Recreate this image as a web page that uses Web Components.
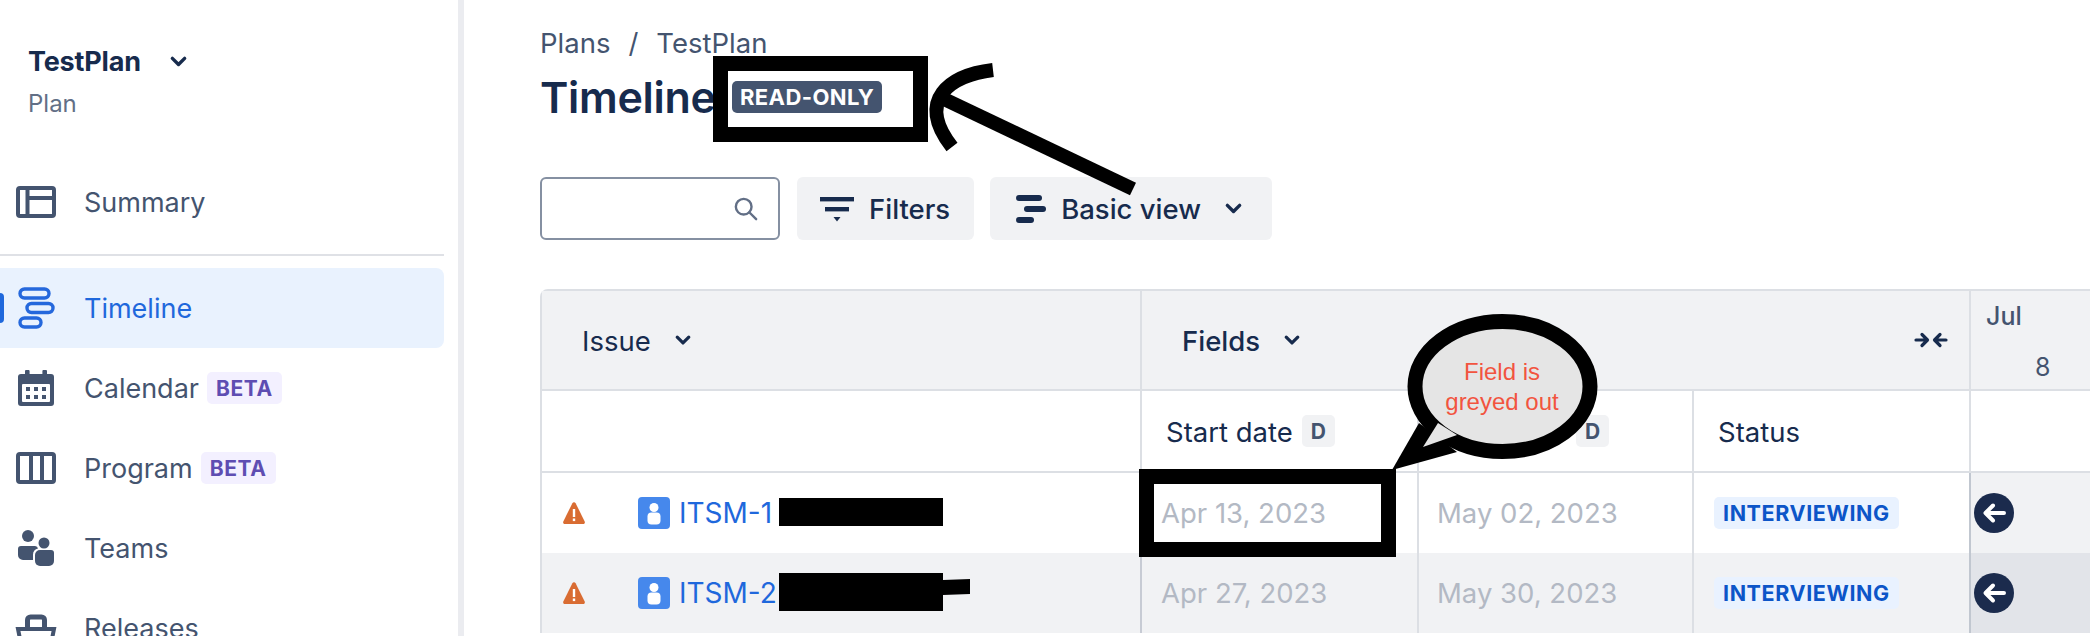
<!DOCTYPE html>
<html>
<head>
<meta charset="utf-8">
<style>
  html, body { margin: 0; height: 100%; background: #fff; }
  body { font-family: Inter, "Noto Sans", sans-serif; color: #172b4d; overflow: hidden; }
</style>
</head>
<body>
<app-shell>
  <app-sidebar slot="sidebar">
    <nav-item icon="summary">Summary</nav-item>
    <nav-item divider></nav-item>
    <nav-item icon="timeline" active>Timeline</nav-item>
    <nav-item icon="calendar" badge="BETA">Calendar</nav-item>
    <nav-item icon="program" badge="BETA">Program</nav-item>
    <nav-item icon="teams">Teams</nav-item>
    <nav-item icon="releases">Releases</nav-item>
  </app-sidebar>

  <page-head>
    <tool-button icon="filter">Filters</tool-button>
    <tool-button icon="basic" caret>Basic view</tool-button>
  </page-head>

  <plan-table>
    <table-row kind="head">
      <table-cell pad="40" low><strong-label caret>Issue</strong-label></table-cell>
      <table-cell span="3" pad="40" line low>
        <strong-label caret style="font-weight:500">Fields</strong-label>
        <app-icon name="collapse" size="34" style="margin:-2px 21px 0 auto"></app-icon>
      </table-cell>
      <table-cell line pad="15"><month-label month="Jul" day="8"></month-label></table-cell>
    </table-row>
    <table-row kind="sub">
      <table-cell></table-cell>
      <table-cell line pad="24" low>Start date<key-tag></key-tag></table-cell>
      <table-cell line pad="148" low><key-tag></key-tag></table-cell>
      <table-cell line pad="24" low>Status</table-cell>
      <table-cell line></table-cell>
    </table-row>
    <issue-row key="ITSM-1" start="Apr 13, 2023" end="May 02, 2023"></issue-row>
    <issue-row key="ITSM-2" start="Apr 27, 2023" end="May 30, 2023" shaded></issue-row>
  </plan-table>

  <mark-up slot="overlay"></mark-up>
</app-shell>

<script>
const ICONS = {
  summary: `<svg viewBox="0 0 40 32" fill="none" stroke="#44546f" stroke-width="4"><rect x="2" y="2" width="36" height="28" rx="2"/><path d="M11.5 2v28M11.5 12H38"/></svg>`,
  timeline: `<svg viewBox="0 0 40 42" fill="none" stroke="#2568dc" stroke-width="3.4"><rect x="4" y="2" width="29" height="9" rx="4.5"/><rect x="11" y="16.5" width="26" height="9" rx="4.5"/><rect x="4" y="31" width="21" height="9" rx="4.5"/></svg>`,
  calendar: `<svg viewBox="0 0 40 36" fill="#44546f"><path d="M10 0h2.600a1 1 0 0 1 1 1v3h12.800V1a1 1 0 0 1 1-1H30a1 1 0 0 1 1 1v3h4a3 3 0 0 1 3 3v26a3 3 0 0 1-3 3H5a3 3 0 0 1-3-3V7a3 3 0 0 1 3-3h4V1a1 1 0 0 1 1-1z"/><rect x="6" y="14" width="28" height="18" rx="1" fill="#fff"/><path d="M10 17h4v4h-4zM18 17h4v4h-4zM26 17h4v4h-4zM10 25h4v4h-4zM18 25h4v4h-4zM26 25h4v4h-4z"/></svg>`,
  program: `<svg viewBox="0 0 40 32" fill="none" stroke="#44546f" stroke-width="4"><rect x="2" y="2" width="36" height="28" rx="2"/><path d="M15 2v28M26 2v28"/></svg>`,
  teams: `<svg viewBox="0 0 40 36" fill="#44546f"><circle cx="12" cy="6" r="6"/><circle cx="28" cy="13" r="5.500"/><path d="M2 19a3 3 0 0 1 3-3h14a3 3 0 0 1 3 2.500c-3 .5-5 3-5 6V30H7a5 5 0 0 1-5-5z"/><path d="M19 25a5 5 0 0 1 5-5h11a3 3 0 0 1 3 3v8a5 5 0 0 1-5 5h-9a5 5 0 0 1-5-5z"/></svg>`,
  releases: `<svg viewBox="0 0 40 36" fill="none" stroke="#44546f" stroke-width="4"><path d="M11.500 17v-7a3 3 0 0 1 3-3h11a3 3 0 0 1 3 3v7" stroke-width="5"/><path d="M2 19h36l-3 15H5z"/></svg>`,
  filter: `<svg viewBox="0 0 34 24" fill="#172b4d"><rect width="34" height="4.400"/><rect x="5" y="10" width="24" height="4.400"/><path d="M13.500 20h7L17 24.500z"/></svg>`,
  basic: `<svg viewBox="0 0 30 28" fill="#172b4d"><rect width="26" height="6" rx="3"/><rect x="8" y="11" width="22" height="6" rx="3"/><rect y="22" width="18" height="6" rx="3"/></svg>`,
  chevron: `<svg viewBox="0 0 18 12" fill="none" stroke="currentColor" stroke-width="3.600" stroke-linecap="round" stroke-linejoin="round"><path d="M2.500 2.500L9 9l6.500-6.500"/></svg>`,
  search: `<svg viewBox="0 0 26 26" fill="none" stroke="#626f86" stroke-width="2.600" stroke-linecap="round"><circle cx="10.500" cy="10.500" r="8.500"/><path d="M16.500 16.500l7.500 7.500"/></svg>`,
  collapse: `<svg viewBox="0 0 34 16" fill="none" stroke="#172b4d" stroke-width="3.200" stroke-linecap="round" stroke-linejoin="round"><path d="M2 8h11M8 2.500L13.500 8 8 13.500M32 8H21M26 2.500L20.500 8 26 13.500"/></svg>`,
  warning: `<svg viewBox="0 0 22 22" fill="#d96c32"><path d="M9.400 1.200a1.800 1.800 0 0 1 3.200 0l9.100 18.200A1.800 1.800 0 0 1 20.100 22H1.900a1.800 1.800 0 0 1-1.600-2.600z"/><rect x="9.800" y="7" width="2.400" height="8" fill="#fff"/><rect x="9.800" y="16.500" width="2.400" height="2.600" fill="#fff"/></svg>`,
  person: `<svg viewBox="0 0 32 32"><rect width="32" height="32" rx="4" fill="#4688ec"/><circle cx="16" cy="10.500" r="4.500" fill="#fff"/><rect x="9.500" y="15.500" width="13" height="12" rx="4" fill="#fff"/></svg>`,
  back: `<svg viewBox="0 0 40 40"><circle cx="20" cy="20" r="20" fill="#1b2b4d"/><path d="M30 20H12M19 12.500L11.500 20 19 27.500" fill="none" stroke="#fff" stroke-width="4" stroke-linecap="round" stroke-linejoin="round"/></svg>`
};

class AppIcon extends HTMLElement {
  connectedCallback() {
    const size = this.getAttribute("size") || 40;
    this.attachShadow({ mode: "open" }).innerHTML = `
      <style>
        :host { display: inline-flex; flex: none; width: ${size}px; }
        svg { display: block; width: 100%; height: auto; overflow: visible; }
      </style>${ICONS[this.getAttribute("name")]}`;
  }
}
customElements.define("app-icon", AppIcon);

class AppShell extends HTMLElement {
  constructor() {
    super();
    this.attachShadow({ mode: "open" }).innerHTML = `
      <style>
        :host { display: flex; position: relative; width: 2090px; height: 636px; overflow: hidden; }
        main { flex: 1; min-width: 0; display: flex; flex-direction: column; padding: 28px 0 0 76px; }
      </style>
      <slot name="sidebar"></slot>
      <main><slot></slot></main>
      <slot name="overlay"></slot>`;
  }
}
customElements.define("app-shell", AppShell);

class AppSidebar extends HTMLElement {
  constructor() {
    super();
    this.attachShadow({ mode: "open" }).innerHTML = `
      <style>
        :host { display: flex; flex-direction: column; flex: none; box-sizing: border-box; width: 464px; height: 636px;
          padding-right: 14px; border-right: 6px solid #ebecf0; overflow: hidden; }
        .plan { padding: 47px 0 0 28px; flex: none; height: 115px; }
        .name { display: flex; align-items: center; font-size: 27px; font-weight: 700; line-height: 30px; color: #172b4d; letter-spacing: -.2px; }
        .name app-icon { margin-left: 29px; color: #172b4d; }
        .type { font-size: 24px; line-height: 30px; margin-top: 12px; color: #626f86; }
      </style>
      <div class="plan">
        <div class="name">TestPlan<app-icon name="chevron" size="17"></app-icon></div>
        <div class="type">Plan</div>
      </div>
      <slot></slot>`;
  }
}
customElements.define("app-sidebar", AppSidebar);

class NavItem extends HTMLElement {
  connectedCallback() {
    const root = this.attachShadow({ mode: "open" });
    if (this.hasAttribute("divider")) {
      root.innerHTML = `<style>:host { display: block; flex: none; height: 2px; margin: 12px 0; background: #dfe1e6; }</style>`;
      return;
    }
    const badge = this.getAttribute("badge");
    const active = this.hasAttribute("active");
    root.innerHTML = `
      <style>
        :host { display: flex; flex: none; align-items: center; height: 80px; position: relative;
          padding-left: 16px; font-size: 27px; color: ${active ? "#1f68dc" : "#44546f"};
          background: ${active ? "#e9f2fe" : "transparent"}; border-radius: 0 8px 8px 0; }
        .text { margin-left: 28px; padding-top: 1px; }
        .pip { position: absolute; left: 0; top: 25px; width: 4px; height: 30px; background: #1f68dc; border-radius: 0 4px 4px 0; }
        .badge { margin-left: 8px; padding: 0 9px; height: 32px; display: flex; align-items: center; border-radius: 5px;
          background: #f3f0ff; color: #5e4db2; font-size: 21px; font-weight: 700; letter-spacing: .6px; }
      </style>
      ${active ? `<span class="pip"></span>` : ""}
      <app-icon name="${this.getAttribute("icon")}" size="40"></app-icon>
      <span class="text"><slot></slot></span>
      ${badge ? `<span class="badge">${badge}</span>` : ""}`;
  }
}
customElements.define("nav-item", NavItem);

class PageHead extends HTMLElement {
  constructor() {
    super();
    this.attachShadow({ mode: "open" }).innerHTML = `
      <style>
        :host { display: flex; flex-direction: column; flex: none; }
        .crumbs { display: flex; gap: 18px; font-size: 27.500px; line-height: 30px; color: #44546f; }
        .title { display: flex; align-items: center; height: 56px; margin-top: 11px; }
        h1 { margin: 0; width: 192px; font-size: 43px; font-weight: 600; color: #172b4d; letter-spacing: -.3px; white-space: nowrap; }
        .read { height: 32px; padding: 0 8px; display: flex; align-items: center; border-radius: 5px; background: #44546f; color: #fff;
          font-size: 22px; font-weight: 700; letter-spacing: .4px; }
        .tools { display: flex; gap: 17px; margin-top: 52px; }
        .search { box-sizing: border-box; width: 240px; height: 63px; border: 2px solid #8590a2; border-radius: 6px;
          display: flex; align-items: center; justify-content: flex-end; padding-right: 20px; }
      </style>
      <div class="crumbs"><span>Plans</span><span>/</span><span>TestPlan</span></div>
      <div class="title"><h1>Timeline</h1><span class="read">READ-ONLY</span></div>
      <div class="tools">
        <div class="search"><app-icon name="search" size="24"></app-icon></div>
        <slot></slot>
      </div>`;
  }
}
customElements.define("page-head", PageHead);

class ToolButton extends HTMLElement {
  connectedCallback() {
    const icon = this.getAttribute("icon");
    this.attachShadow({ mode: "open" }).innerHTML = `
      <style>
        :host { display: flex; align-items: center; height: 63px; box-sizing: border-box; padding: 0 24px 0 ${icon === "basic" ? 26 : 23}px;
          background: #f1f2f4; border-radius: 6px; font-size: 27.500px; font-weight: 500; color: #172b4d; }
        :host(:last-child) { margin-left: -1px; }
        .label { margin-left: 15px; padding-top: 1px; }
        .caret { margin-left: 24px; margin-right: 6px; }
      </style>
      <app-icon name="${icon}" size="${icon === "basic" ? 30 : 34}"></app-icon>
      <span class="label"><slot></slot></span>
      ${this.hasAttribute("caret") ? `<app-icon class="caret" name="chevron" size="17"></app-icon>` : ""}`;
  }
}
customElements.define("tool-button", ToolButton);

class PlanTable extends HTMLElement {
  constructor() {
    super();
    this.attachShadow({ mode: "open" }).innerHTML = `
      <style>
        :host { display: block; margin-top: 49px; border-top: 2px solid #dcdfe4; border-left: 2px solid #dcdfe4; border-top-left-radius: 8px; }
      </style>
      <slot></slot>`;
  }
}
customElements.define("plan-table", PlanTable);

class TableRow extends HTMLElement {
  connectedCallback() {
    const kind = this.getAttribute("kind");
    const columns = "598px 277px 275px 277px 1fr";
    const height = kind === "head" ? 98 : 80;
    this.attachShadow({ mode: "open" }).innerHTML = `
      <style>
        :host { display: grid; grid-template-columns: ${columns}; height: ${height}px;
          background: ${kind === "head" || kind === "shaded" ? "#f1f2f4" : "#fff"};
          ${kind === "head" || kind === "sub" ? "border-bottom: 2px solid #dcdfe4;" : ""} }
      </style>
      <slot></slot>`;
  }
}
customElements.define("table-row", TableRow);

class TableCell extends HTMLElement {
  connectedCallback() {
    const span = this.getAttribute("span") || 1;
    const pad = this.getAttribute("pad") || 0;
    this.attachShadow({ mode: "open" }).innerHTML = `
      <style>
        :host { display: flex; align-items: center; min-width: 0; box-sizing: border-box; grid-column: span ${span};
          padding-left: ${pad}px; font-size: 27.500px; color: #172b4d; white-space: nowrap;
          ${this.hasAttribute("low") ? "padding-top: 2px;" : ""}
          ${this.hasAttribute("line") ? "border-left: 2px solid var(--line, #dcdfe4);" : ""} }
      </style>
      <slot></slot>`;
  }
}
customElements.define("table-cell", TableCell);

class StrongLabel extends HTMLElement {
  connectedCallback() {
    this.attachShadow({ mode: "open" }).innerHTML = `
      <style>
        :host { display: inline-flex; align-items: center; font-size: 27.500px; color: #172b4d; }
        app-icon { margin: -2px 0 0 24px; }
      </style>
      <slot></slot><app-icon name="chevron" size="16"></app-icon>`;
  }
}
customElements.define("strong-label", StrongLabel);

class KeyTag extends HTMLElement {
  constructor() {
    super();
    this.attachShadow({ mode: "open" }).innerHTML = `
      <style>
        :host { display: inline-flex; align-items: center; justify-content: center; width: 33px; height: 32px; margin: -2px 0 0 9px;
          background: #f1f2f4; border-radius: 5px; color: #44546f; font-size: 21px; font-weight: 700; }
      </style>D`;
  }
}
customElements.define("key-tag", KeyTag);

class MonthLabel extends HTMLElement {
  connectedCallback() {
    this.attachShadow({ mode: "open" }).innerHTML = `
      <style>
        :host { display: flex; flex-direction: column; align-self: stretch; padding-top: 11px; color: #44546f; font-size: 25px; }
        .m { font-weight: 500; line-height: 28px; }
        .d { margin: 23px 0 0 49px; line-height: 28px; }
      </style>
      <span class="m">${this.getAttribute("month")}</span>
      <span class="d">${this.getAttribute("day")}</span>`;
  }
}
customElements.define("month-label", MonthLabel);

class IssueRow extends HTMLElement {
  connectedCallback() {
    const shaded = this.hasAttribute("shaded");
    this.attachShadow({ mode: "open" }).innerHTML = `
      <style>
        :host { display: block; }
        .issue { display: flex; align-items: center; color: #1f68dc; }
        .key { margin-left: 9px; font-size: 28px; }
        .date { color: #b3b9c4; }
        .status { height: 32px; padding: 0 9px; display: flex; align-items: center; border-radius: 5px;
          background: #e9f2ff; color: #0c55c8; font-size: 21.500px; font-weight: 700; letter-spacing: .6px; }
        .track { align-self: stretch; flex: 1; display: flex; align-items: center; background: ${shaded ? "#e2e4e9" : "#f1f2f4"}; }
      </style>
      <table-row kind="${shaded ? "shaded" : "plain"}">
        <table-cell pad="21">
          <app-icon name="warning" size="22"></app-icon>
          <span class="issue" style="margin-left:53px">
            <app-icon name="person" size="32"></app-icon>
            <span class="key">${this.getAttribute("key")}</span>
          </span>
        </table-cell>
        <table-cell line pad="19" style="--line:#c7cbd4"><span class="date">${this.getAttribute("start")}</span></table-cell>
        <table-cell line pad="18"><span class="date">${this.getAttribute("end")}</span></table-cell>
        <table-cell line pad="20"><span class="status">INTERVIEWING</span></table-cell>
        <table-cell line style="--line:#c1c7d0">
          <span class="track"><app-icon name="back" size="40" style="margin-left:3px"></app-icon></span>
        </table-cell>
      </table-row>`;
  }
}
customElements.define("issue-row", IssueRow);

// hand drawn annotations that sit on top of the screenshot
class MarkUp extends HTMLElement {
  constructor() {
    super();
    this.attachShadow({ mode: "open" }).innerHTML = `
      <style>
        :host { position: absolute; inset: 0; pointer-events: none; }
        svg { position: absolute; inset: 0; }
        .say { position: absolute; left: 1402px; top: 357px; width: 200px; text-align: center;
          font: 24px/30px "Liberation Sans", Arial, sans-serif; color: #f2543f; }
      </style>
      <svg width="2090" height="636" viewBox="0 0 2090 636" fill="none" stroke="#000">
        <rect x="720.500" y="63.500" width="200" height="71" stroke-width="15"/>
        <rect x="1146.500" y="476.500" width="242" height="73" stroke-width="15"/>
        <path d="M993 70C950 75 915 100 952 147" stroke-width="14"/>
        <path d="M945 99.500L1133 189" stroke-width="14"/>
        <path d="M1392 470L1419 423L1457 452L1392 470Z" fill="#000" stroke="none"/>
        <ellipse cx="1502.500" cy="386.500" rx="87.500" ry="65" fill="#e5e5e5" stroke-width="15"/>
        <path d="M1423 447L1438 423L1457 435Z" fill="#e5e5e5" stroke="none"/>
        <g fill="#000" stroke="none">
          <rect x="779" y="498" width="164" height="28"/>
          <rect x="779" y="573" width="164" height="38"/>
          <path d="M943 580L970 579L970 594L943 595Z"/>
        </g>
      </svg>
      <div class="say">Field is<br>greyed out</div>`;
  }
}
customElements.define("mark-up", MarkUp);
</script>
</body>
</html>
